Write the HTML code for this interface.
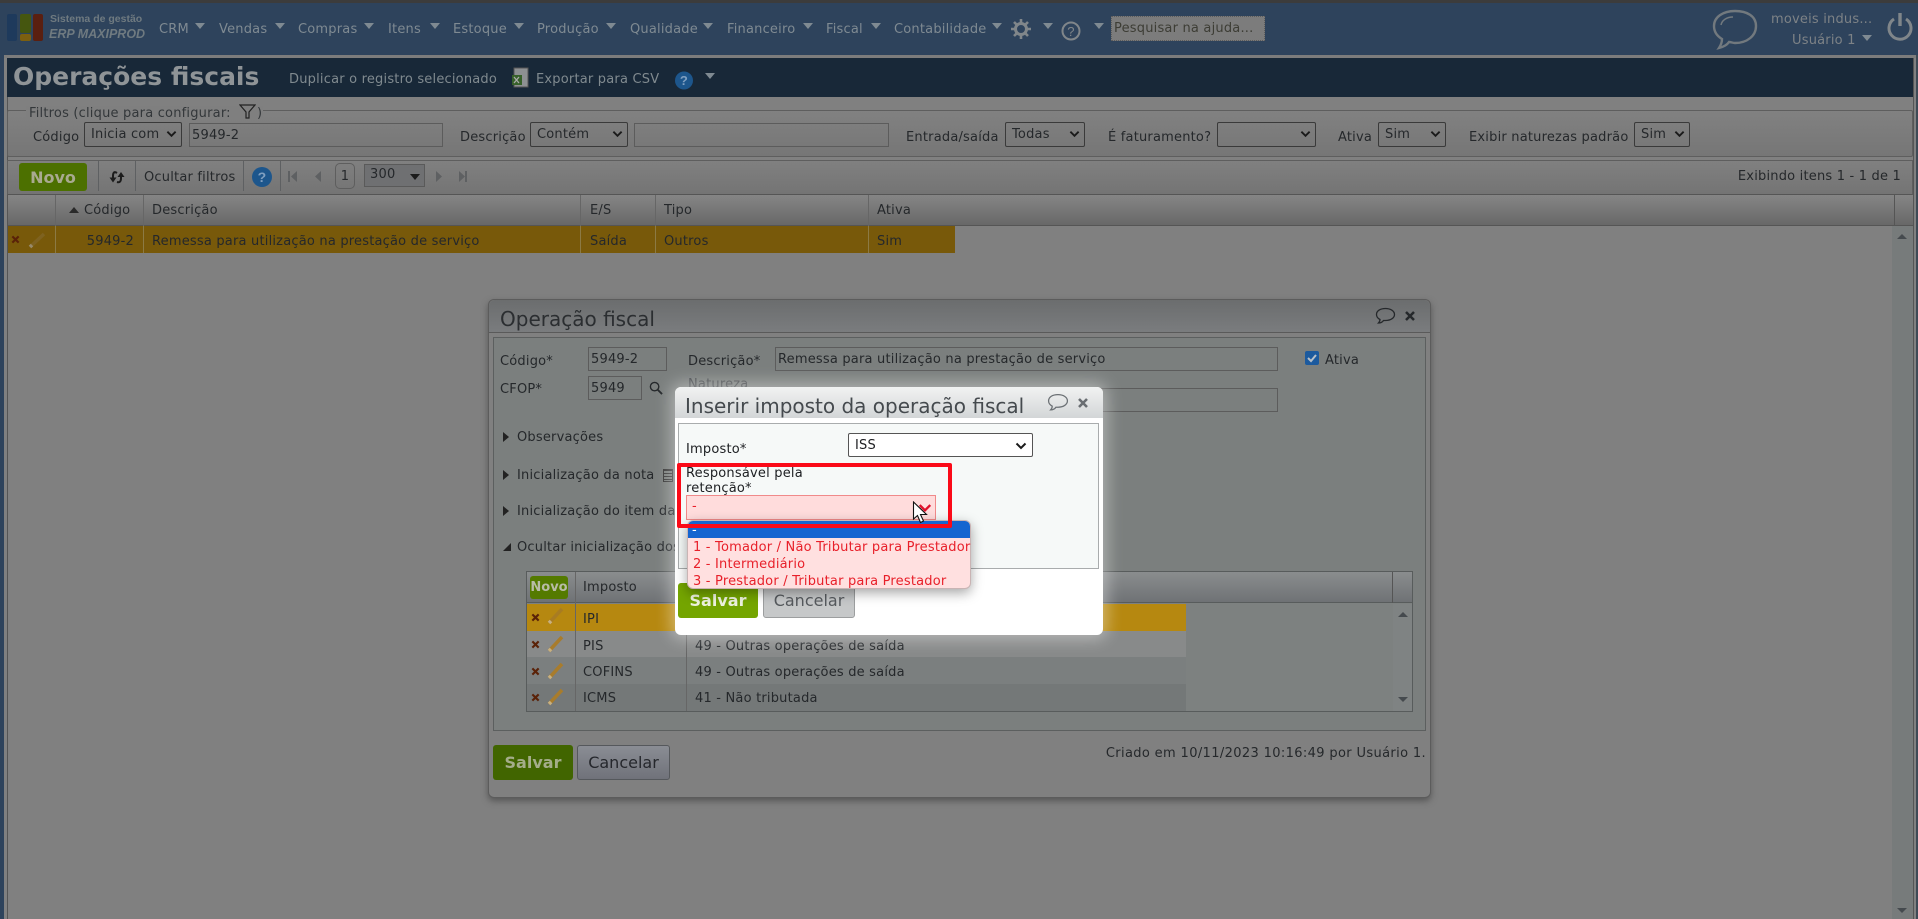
<!DOCTYPE html>
<html lang="pt-BR"><head><meta charset="utf-8"><title>Operações fiscais</title>
<style>
*{box-sizing:border-box}
html,body{margin:0;padding:0;width:1918px;height:919px;overflow:hidden;background:#808080}
body{position:relative;font-family:"DejaVu Sans","Liberation Sans",sans-serif;font-size:13px;letter-spacing:.2px;color:#25282b}
.a{position:absolute}
.t{position:absolute;white-space:nowrap;line-height:16px;height:16px;margin-top:1px}
.m{color:#7f8a92}
.tri{position:absolute;width:0;height:0;border-left:5px solid transparent;border-right:5px solid transparent;border-top:6px solid #7f8a92}
.sel{position:absolute;border:1px solid #3a3a3a;border-radius:2px;height:25px;line-height:24px;padding-left:6px;color:#25282b;white-space:nowrap}
.sel svg{position:absolute;right:4px;top:7px}
.inp{position:absolute;border:1px solid #5c5c5c;height:24px;line-height:24px;padding-left:2px;color:#25282b;white-space:nowrap}
.sep{position:absolute;width:1px;background:#5e6062}
.btn{position:absolute;border-radius:3px;text-align:center;font-weight:bold;letter-spacing:0}
</style></head><body>

<!-- top header -->
<div class="a" style="left:0;top:0;width:1918px;height:3px;background:#3c3c3c"></div>
<div class="a" style="left:0;top:3px;width:1918px;height:52px;background:#2e435c"></div>
<div class="a" style="left:0;top:55px;width:4px;height:864px;background:#2e435c"></div>
<div class="a" style="left:1916px;top:55px;width:2px;height:864px;background:#3e4a55"></div>
<div class="a" style="left:1913px;top:55px;width:1px;height:864px;background:#555"></div>
<div class="a" style="left:7px;top:57px;width:1px;height:862px;background:#555"></div>

<div class="a" style="left:7px;top:14px;width:10px;height:27px;background:#1e3a5c;border-radius:2px"></div>
<div class="a" style="left:20px;top:14px;width:11px;height:19px;background:#45560f;border-radius:2px"></div>
<div class="a" style="left:20px;top:34px;width:11px;height:7px;background:#7c5f10;border-radius:2px"></div>
<div class="a" style="left:33px;top:14px;width:10px;height:27px;background:#5a1f10;border-radius:2px"></div>
<div class="t" style="left:50px;top:10px;font-weight:bold;color:#6f7a80;font-family:'Liberation Sans',sans-serif;font-size:10.500px;letter-spacing:0">Sistema de gestão</div>
<div class="t" style="left:49px;top:25px;font-size:12.500px;letter-spacing:0;font-weight:bold;font-style:italic;color:#6f7a80;font-family:'Liberation Sans',sans-serif">ERP MAXIPROD</div>

<div class="t m" style="left:159px;top:21px">CRM</div><div class="tri" style="left:195px;top:23px"></div>
<div class="t m" style="left:219px;top:21px">Vendas</div><div class="tri" style="left:275px;top:23px"></div>
<div class="t m" style="left:298px;top:21px">Compras</div><div class="tri" style="left:364px;top:23px"></div>
<div class="t m" style="left:388px;top:21px">Itens</div><div class="tri" style="left:430px;top:23px"></div>
<div class="t m" style="left:453px;top:21px">Estoque</div><div class="tri" style="left:514px;top:23px"></div>
<div class="t m" style="left:537px;top:21px">Produção</div><div class="tri" style="left:606px;top:23px"></div>
<div class="t m" style="left:630px;top:21px">Qualidade</div><div class="tri" style="left:703px;top:23px"></div>
<div class="t m" style="left:727px;top:21px">Financeiro</div><div class="tri" style="left:803px;top:23px"></div>
<div class="t m" style="left:826px;top:21px">Fiscal</div><div class="tri" style="left:871px;top:23px"></div>
<div class="t m" style="left:894px;top:21px">Contabilidade</div><div class="tri" style="left:992px;top:23px"></div>

<svg class="a" style="left:1011px;top:19px" width="20" height="20" viewBox="0 0 20 20"><circle cx="10" cy="10" r="5.500" fill="none" stroke="#80868a" stroke-width="3"/><g stroke="#80868a" stroke-width="2.600"><path d="M10 0v3.500M10 16.500V20M0 10h3.500M16.500 10H20M3 3l2.500 2.500M14.500 14.500L17 17M17 3l-2.500 2.500M5.500 14.500L3 17"/></g></svg>
<div class="tri" style="left:1043px;top:23px"></div>
<svg class="a" style="left:1061px;top:21px" width="20" height="20" viewBox="0 0 20 20"><circle cx="10" cy="10" r="8.500" fill="none" stroke="#80868a" stroke-width="2"/><text x="10" y="15" text-anchor="middle" font-size="13" fill="#80868a" font-family="Liberation Sans,sans-serif">?</text></svg>
<div class="tri" style="left:1094px;top:23px"></div>
<div class="a" style="left:1111px;top:16px;width:154px;height:25px;background:#7c7c7c;border:1px dotted #5c5c5c;line-height:24px;padding-left:2px;color:#3d3d35;white-space:nowrap;overflow:hidden">Pesquisar na ajuda...</div>

<svg class="a" style="left:1711px;top:8px" width="48" height="44" viewBox="0 0 48 44"><path d="M24 3C12 3 3 9 3 18c0 6 3 10 8 13 0 3-1 6-3 9 4-1 8-3 10-6 2 0 4 1 6 1 12 0 21-7 21-17S36 3 24 3z" fill="none" stroke="#72797e" stroke-width="2.400"/><path d="M10 17c1-5 6-8 12-8" fill="none" stroke="#72797e" stroke-width="1.500"/></svg>
<div class="t" style="left:1771px;top:11px;color:#7d8286">moveis indus...</div>
<div class="t" style="left:1792px;top:32px;color:#7d8286">Usuário 1</div>
<div class="tri" style="left:1862px;top:35px"></div>
<svg class="a" style="left:1886px;top:12px" width="28" height="30" viewBox="0 0 28 30"><path d="M8 7a11 11 0 1 0 12 0" fill="none" stroke="#80868a" stroke-width="3"/><path d="M14 1v13" stroke="#80868a" stroke-width="3.400"/></svg>

<!-- title bar -->
<div class="a" style="left:4px;top:55px;width:1912px;height:3px;background:#7c7c7c"></div>
<div class="a" style="left:7px;top:58px;width:1906px;height:39px;background:#182838"></div>
<div class="t" style="left:13px;top:60px;margin-top:0;height:34px;line-height:34px;font-size:25px;letter-spacing:0;font-weight:bold;color:#8f9497">Operações fiscais</div>
<div class="t" style="left:289px;top:71px;color:#808a8f">Duplicar o registro selecionado</div>
<svg class="a" style="left:511px;top:67px" width="20" height="22" viewBox="0 0 20 22"><rect x="3" y="1" width="14" height="19" fill="#8d9092" stroke="#555"/><rect x="1" y="8" width="10" height="10" fill="#37602a"/><path d="M3 10l5 6M8 10l-5 6" stroke="#aaa" stroke-width="1.300"/></svg>
<div class="t" style="left:536px;top:71px;color:#808a8f">Exportar para CSV</div>
<svg class="a" style="left:675px;top:71px" width="18" height="19" viewBox="0 0 18 19"><circle cx="9" cy="9.500" r="9" fill="#1d568c"/><text x="9" y="14" text-anchor="middle" font-size="13" font-weight="bold" fill="#7f9fc0" font-family="Liberation Sans,sans-serif">?</text></svg>
<div class="tri" style="left:705px;top:73px"></div>

<!-- filters -->
<div class="a" style="left:7px;top:110px;width:1906px;height:47px;border:1px solid #5e5e5e;border-radius:2px;background:linear-gradient(#818181,#767676)"></div>
<div class="a" style="left:26px;top:106px;width:237px;height:12px;background:#7f7f7f"></div>
<div class="t" style="left:29px;top:105px;color:#33373a">Filtros (clique para configurar:</div>
<svg class="a" style="left:239px;top:104px" width="17" height="15" viewBox="0 0 17 15"><path d="M1 1h15l-6 7v6H7V8z" fill="none" stroke="#222" stroke-width="1.200"/></svg>
<div class="t" style="left:257px;top:105px;color:#33373a">)</div>

<svg width="0" height="0" style="position:absolute"><symbol id="c" viewBox="0 0 12 8"><path d="M1.500 1.500L6 6l4.500-4.500" fill="none" stroke="#1a1a1a" stroke-width="2"/></symbol></svg>

<div class="t" style="left:33px;top:129px">Código</div>
<div class="sel" style="left:84px;top:122px;width:98px">Inicia com<svg width="11" height="8"><use href="#c"/></svg></div>
<div class="inp" style="left:189px;top:123px;width:254px">5949-2</div>
<div class="t" style="left:460px;top:129px">Descrição</div>
<div class="sel" style="left:530px;top:122px;width:98px">Contém<svg width="11" height="8"><use href="#c"/></svg></div>
<div class="inp" style="left:634px;top:123px;width:255px"></div>
<div class="t" style="left:906px;top:129px">Entrada/saída</div>
<div class="sel" style="left:1005px;top:122px;width:80px">Todas<svg width="11" height="8"><use href="#c"/></svg></div>
<div class="t" style="left:1108px;top:129px">É faturamento?</div>
<div class="sel" style="left:1217px;top:122px;width:99px"><svg width="11" height="8"><use href="#c"/></svg></div>
<div class="t" style="left:1338px;top:129px">Ativa</div>
<div class="sel" style="left:1378px;top:122px;width:68px">Sim<svg width="11" height="8"><use href="#c"/></svg></div>
<div class="t" style="left:1469px;top:129px">Exibir naturezas padrão</div>
<div class="sel" style="left:1634px;top:122px;width:56px">Sim<svg width="11" height="8"><use href="#c"/></svg></div>

<!-- toolbar -->
<div class="a" style="left:7px;top:160px;width:1906px;height:35px;border:1px solid #5e5e5e;border-bottom:1px solid #555;background:linear-gradient(#808080,#747474)"></div>
<div class="btn" style="left:19px;top:163px;width:68px;height:28px;line-height:29px;background:#4c7000;color:#a9aa90;font-size:16px">Novo</div>
<div class="sep" style="left:98px;top:161px;height:30px"></div>
<svg class="a" style="left:108px;top:171px" width="18" height="13" viewBox="0 0 18 13"><path d="M9 2C6 0 5 2 5 5v3M9 11c3 1 4-1 4-4V4" fill="none" stroke="#1c1c1c" stroke-width="2"/><path d="M1.500 6.500h7L5 11.500zM9.500 6l3.500-5 3.500 5z" fill="#1c1c1c"/></svg>
<div class="sep" style="left:135px;top:161px;height:30px"></div>
<div class="t" style="left:144px;top:169px">Ocultar filtros</div>
<div class="sep" style="left:243px;top:161px;height:30px"></div>
<svg class="a" style="left:252px;top:167px" width="20" height="20" viewBox="0 0 20 20"><circle cx="10" cy="10" r="10" fill="#1d568c"/><text x="10" y="15" text-anchor="middle" font-size="14" font-weight="bold" fill="#7f9fc0" font-family="Liberation Sans,sans-serif">?</text></svg>
<div class="sep" style="left:280px;top:161px;height:30px"></div>
<svg class="a" style="left:287px;top:170px" width="180" height="14" viewBox="0 0 180 14" fill="#5e6062"><rect x="1" y="1" width="2" height="11"/><path d="M10 1v11L4 6.500zM34 1v11L28 6.500zM149 1v11l6-5.500zM172 1v11l6-5.500z"/><rect x="178" y="1" width="2" height="11"/></svg>
<div class="a" style="left:335px;top:163px;width:20px;height:26px;border:1px solid #5e5e5e;border-radius:5px;text-align:center;line-height:25px">1</div>
<div class="a" style="left:364px;top:164px;width:61px;height:23px;border:1px solid #5a5a5a;background:#6f7072;line-height:20px;padding-left:5px">300</div>
<div class="tri" style="left:410px;top:174px;border-top-color:#1c1c1c"></div>
<div class="t" style="right:17px;top:168px">Exibindo itens 1 - 1 de 1</div>

<!-- grid -->
<div class="a" style="left:8px;top:195px;width:1905px;height:31px;border-bottom:1px solid #555;background:linear-gradient(#858585,#686868)"></div>
<div class="sep" style="left:55px;top:195px;height:58px;background:#666"></div>
<div class="sep" style="left:143px;top:195px;height:58px;background:#666"></div>
<div class="sep" style="left:580px;top:195px;height:58px;background:#666"></div>
<div class="sep" style="left:655px;top:195px;height:58px;background:#666"></div>
<div class="sep" style="left:868px;top:195px;height:58px;background:#666"></div>
<div class="sep" style="left:1894px;top:195px;height:31px;background:#555"></div>
<div class="tri" style="left:69px;top:207px;border-top:0;border-bottom:6px solid #2a2a2a"></div>
<div class="t" style="left:84px;top:202px">Código</div>
<div class="t" style="left:152px;top:202px">Descrição</div>
<div class="t" style="left:590px;top:202px">E/S</div>
<div class="t" style="left:664px;top:202px">Tipo</div>
<div class="t" style="left:877px;top:202px">Ativa</div>

<div class="a" style="left:8px;top:226px;width:947px;height:27px;background:#78590a"></div>
<div class="sep" style="left:55px;top:226px;height:27px;background:#8c7a44"></div>
<div class="sep" style="left:143px;top:226px;height:27px;background:#8c7a44"></div>
<div class="sep" style="left:580px;top:226px;height:27px;background:#8c7a44"></div>
<div class="sep" style="left:655px;top:226px;height:27px;background:#8c7a44"></div>
<div class="sep" style="left:868px;top:226px;height:27px;background:#8c7a44"></div>
<svg class="a" style="left:11px;top:235px" width="9" height="9" viewBox="0 0 10 10"><path d="M1.500 1.500l7 7M8.500 1.500l-7 7" stroke="#5a2208" stroke-width="2.400"/></svg>
<svg class="a" style="left:27px;top:230px" width="20" height="20" viewBox="0 0 20 20"><path d="M3 17L17 4" stroke="#7e6220" stroke-width="3.500"/><path d="M3 17l2-2" stroke="#97896a" stroke-width="3.500"/></svg>
<div class="t" style="left:84px;top:233px;width:50px;text-align:right">5949-2</div>
<div class="t" style="left:152px;top:233px">Remessa para utilização na prestação de serviço</div>
<div class="t" style="left:590px;top:233px">Saída</div>
<div class="t" style="left:664px;top:233px">Outros</div>
<div class="t" style="left:877px;top:233px">Sim</div>
<div class="a" style="left:1892px;top:226px;width:21px;height:693px;background:#777b7b"></div>
<div class="tri" style="left:1897px;top:234px;border-top:0;border-bottom:5px solid #454a4e"></div>
<div class="tri" style="left:1897px;top:908px;border-top:5px solid #454a4e"></div>

<!-- outer dialog -->
<div class="a" style="left:488px;top:299px;width:943px;height:499px;background:#808080;border:1px solid #5c5c5c;border-radius:6px;box-shadow:0 3px 7px #555"></div>
<div class="a" style="left:489px;top:300px;width:941px;height:33px;background:linear-gradient(#6b6d6e,#7a7c7e);border-bottom:1px solid #5a5a5a;border-radius:6px 6px 0 0"></div>
<div class="t" style="left:500px;top:305px;margin-top:0;height:28px;line-height:28px;font-size:20px;letter-spacing:0;color:#2b2e31">Operação fiscal</div>
<svg class="a" style="left:1375px;top:307px" width="21" height="18" viewBox="0 0 21 18"><path d="M10.500 1.500C5 1.500 1.500 4 1.500 7.500c0 2.500 1.500 4 3.500 5 0 1.500-.5 2.500-1.500 3.500 2 0 4-1 5-2.500h2c5 0 9-2.500 9-6s-4-6-9-6z" fill="none" stroke="#25282b" stroke-width="1.300"/></svg>
<svg class="a" style="left:1404px;top:310px" width="12" height="12" viewBox="0 0 12 12"><path d="M2 2l8 8M10 2l-8 8" stroke="#25282b" stroke-width="2.500"/></svg>
<div class="a" style="left:493px;top:337px;width:933px;height:394px;border:1px solid #5c5f5f;background:#7b7f7e"></div>

<div class="t" style="left:500px;top:353px">Código*</div>
<div class="inp" style="left:588px;top:347px;width:79px">5949-2</div>
<div class="t" style="left:688px;top:353px">Descrição*</div>
<div class="inp" style="left:775px;top:347px;width:503px">Remessa para utilização na prestação de serviço</div>
<div class="a" style="left:1305px;top:351px;width:14px;height:14px;border-radius:2px;background:#1c5a9e"></div>
<svg class="a" style="left:1305px;top:351px" width="14" height="14" viewBox="0 0 14 14"><path d="M3 7l3 3 5-6" fill="none" stroke="#b8c0c8" stroke-width="2"/></svg>
<div class="t" style="left:1325px;top:352px">Ativa</div>
<div class="t" style="left:500px;top:381px">CFOP*</div>
<div class="inp" style="left:588px;top:376px;width:54px">5949</div>
<svg class="a" style="left:649px;top:381px" width="14" height="14" viewBox="0 0 15 15"><circle cx="6" cy="6" r="4.500" fill="none" stroke="#25282b" stroke-width="1.500"/><path d="M9.500 9.500L14 14" stroke="#25282b" stroke-width="2"/></svg>
<div class="t" style="left:688px;top:376px;color:#4a4d50">Natureza</div>
<div class="inp" style="left:775px;top:388px;width:503px"></div>

<div class="tri" style="left:503px;top:432px;border:0;border-left:6px solid #222;border-top:5px solid transparent;border-bottom:5px solid transparent"></div>
<div class="t" style="left:517px;top:429px">Observações</div>
<div class="tri" style="left:503px;top:470px;border:0;border-left:6px solid #222;border-top:5px solid transparent;border-bottom:5px solid transparent"></div>
<div class="t" style="left:517px;top:467px">Inicialização da nota</div>
<div class="a" style="left:663px;top:469px;width:10px;height:13px;border:1px solid #3a3a3a;background:repeating-linear-gradient(#3a3a3a 0 1px,transparent 1px 3px)"></div>
<div class="tri" style="left:503px;top:506px;border:0;border-left:6px solid #222;border-top:5px solid transparent;border-bottom:5px solid transparent"></div>
<div class="t" style="left:517px;top:503px">Inicialização do item da nota</div>
<div class="a" style="left:503px;top:543px;width:0;height:0;border-right:8px solid #222;border-top:8px solid transparent"></div>
<div class="t" style="left:517px;top:539px">Ocultar inicialização dos impostos</div>

<!-- inner grid -->
<div class="a" style="left:526px;top:571px;width:887px;height:141px;border:1px solid #585c5c;background:#7d8180"></div>
<div class="a" style="left:527px;top:572px;width:885px;height:31px;border-bottom:1px solid #585c5c;background:linear-gradient(#8a8d8e,#6f7275)"></div>
<div class="btn" style="left:530px;top:576px;width:38px;height:23px;line-height:24px;font-size:13px;background:#547a00;color:#b9bca6">Novo</div>
<div class="t" style="left:583px;top:579px">Imposto</div>
<div class="a" style="left:527px;top:604px;width:659px;height:27px;background:#b68810"></div>
<div class="a" style="left:527px;top:631px;width:659px;height:26px;background:#888a8a"></div>
<div class="a" style="left:527px;top:657px;width:659px;height:27px;background:#7b7f7f"></div>
<div class="a" style="left:527px;top:684px;width:659px;height:27px;background:#747878"></div>
<div class="sep" style="left:575px;top:572px;height:139px;background:#666"></div>
<div class="sep" style="left:686px;top:572px;height:139px;background:#666"></div>
<div class="a" style="left:1393px;top:604px;width:19px;height:107px;background:#7f8383"></div>
<div class="sep" style="left:1392px;top:572px;height:31px;background:#555"></div>
<div class="tri" style="left:1398px;top:612px;border-top:0;border-bottom:5px solid #454a4e"></div>
<div class="tri" style="left:1398px;top:697px;border-top:5px solid #454a4e"></div>

<svg class="a" style="left:531px;top:613px" width="9" height="9" viewBox="0 0 10 10"><path d="M1.500 1.500l7 7M8.500 1.500l-7 7" stroke="#5a2208" stroke-width="2.400"/></svg>
<svg class="a" style="left:547px;top:606px" width="18" height="20" viewBox="0 0 18 20"><path d="M2 17L15 3" stroke="#a87c22" stroke-width="3.500"/><path d="M2 17l2-2" stroke="#c8b080" stroke-width="3.500"/></svg>
<svg class="a" style="left:531px;top:640px" width="9" height="9" viewBox="0 0 10 10"><path d="M1.500 1.500l7 7M8.500 1.500l-7 7" stroke="#5a2208" stroke-width="2.400"/></svg>
<svg class="a" style="left:547px;top:634px" width="18" height="20" viewBox="0 0 18 20"><path d="M2 17L15 3" stroke="#a87c2c" stroke-width="3.500"/><path d="M2 17l2-2" stroke="#c8b080" stroke-width="3.500"/></svg>
<svg class="a" style="left:531px;top:667px" width="9" height="9" viewBox="0 0 10 10"><path d="M1.500 1.500l7 7M8.500 1.500l-7 7" stroke="#5a2208" stroke-width="2.400"/></svg>
<svg class="a" style="left:547px;top:661px" width="18" height="20" viewBox="0 0 18 20"><path d="M2 17L15 3" stroke="#a87c2c" stroke-width="3.500"/><path d="M2 17l2-2" stroke="#c8b080" stroke-width="3.500"/></svg>
<svg class="a" style="left:531px;top:693px" width="9" height="9" viewBox="0 0 10 10"><path d="M1.500 1.500l7 7M8.500 1.500l-7 7" stroke="#5a2208" stroke-width="2.400"/></svg>
<svg class="a" style="left:547px;top:687px" width="18" height="20" viewBox="0 0 18 20"><path d="M2 17L15 3" stroke="#a87c2c" stroke-width="3.500"/><path d="M2 17l2-2" stroke="#c8b080" stroke-width="3.500"/></svg>

<div class="t" style="left:583px;top:611px">IPI</div>
<div class="t" style="left:583px;top:638px">PIS</div>
<div class="t" style="left:695px;top:638px">49 - Outras operações de saída</div>
<div class="t" style="left:583px;top:664px">COFINS</div>
<div class="t" style="left:695px;top:664px">49 - Outras operações de saída</div>
<div class="t" style="left:583px;top:690px">ICMS</div>
<div class="t" style="left:695px;top:690px">41 - Não tributada</div>

<div class="btn" style="left:493px;top:745px;width:80px;height:35px;line-height:35px;background:#416500;color:#a4ad8a;font-size:16px">Salvar</div>
<div class="btn" style="left:577px;top:745px;width:93px;height:35px;line-height:33px;background:linear-gradient(#8a8d94,#70727a);border:1px solid #55585c;color:#25272c;font-size:16px;font-weight:normal">Cancelar</div>
<div class="t" style="right:492px;top:745px;letter-spacing:.36px">Criado em 10/11/2023 10:16:49 por Usuário 1.</div>

<!-- inner dialog -->
<div class="a" style="left:675px;top:387px;width:428px;height:248px;background:#fff;border-radius:6px;box-shadow:0 0 16px 4px rgba(255,255,255,.4)"></div>
<div class="a" style="left:675px;top:387px;width:428px;height:31px;background:linear-gradient(#f1f2f2,#d3d6d7);border-radius:6px 6px 0 0"></div>
<div class="t" style="left:685px;top:392px;margin-top:0;height:28px;line-height:28px;font-size:20px;letter-spacing:0;color:#454a4e">Inserir imposto da operação fiscal</div>
<svg class="a" style="left:1047px;top:393px" width="22" height="19" viewBox="0 0 21 18"><path d="M10.500 1.500C5 1.500 1.500 4 1.500 7.500c0 2.500 1.500 4 3.500 5 0 1.500-.5 2.500-1.500 3.500 2 0 4-1 5-2.500h2c5 0 9-2.500 9-6s-4-6-9-6z" fill="none" stroke="#6b7074" stroke-width="1.200"/></svg>
<svg class="a" style="left:1077px;top:397px" width="12" height="12" viewBox="0 0 12 12"><path d="M2 2l8 8M10 2l-8 8" stroke="#6a6e72" stroke-width="2.600"/></svg>
<div class="a" style="left:678px;top:423px;width:421px;height:146px;border:1px solid #a9acad;background:#f6f9f8"></div>
<div class="t" style="left:686px;top:441px;color:#1d1f22">Imposto*</div>
<div class="a" style="left:848px;top:433px;width:185px;height:24px;background:#fff;border:1px solid #555;border-radius:2px;line-height:23px;padding-left:6px;color:#1d1f22">ISS<svg style="position:absolute;right:5px;top:8px" width="12" height="8"><use href="#c"/></svg></div>
<div class="t" style="left:686px;top:465px;color:#1d1f22">Responsável pela</div>
<div class="t" style="left:686px;top:480px;color:#1d1f22">retenção*</div>
<div class="a" style="left:686px;top:495px;width:250px;height:25px;background:#ffdcdc;border:1px solid #f08a8a;line-height:22px;padding-left:5px;color:#e8202a">-</div>
<svg class="a" style="left:918px;top:503px" width="14" height="10" viewBox="0 0 12 8"><path d="M1.500 1.500L6 6l4.500-4.500" fill="none" stroke="#e0102a" stroke-width="2"/></svg>
<div class="btn" style="left:678px;top:583px;width:80px;height:35px;line-height:35px;background:#74a500;color:#eef3df;font-size:16px">Salvar</div>
<div class="btn" style="left:763px;top:583px;width:92px;height:35px;line-height:33px;background:#c6c8c9;border:1px solid #9c9e9f;color:#565a5e;font-size:16px;font-weight:normal">Cancelar</div>
<div class="a" style="left:687px;top:520px;width:284px;height:69px;background:#ffe0e0;border-radius:6px;border:1px solid #c9b4b4;box-shadow:0 4px 12px rgba(0,0,0,.35);overflow:hidden">
 <div style="height:17px;background:#1565d0;color:#fff;line-height:20px;padding-left:4px">-</div>
</div>
<div class="t" style="left:693px;top:539px;color:#e8202a">1 - Tomador / Não Tributar para Prestador</div>
<div class="t" style="left:693px;top:556px;color:#e8202a">2 - Intermediário</div>
<div class="t" style="left:693px;top:573px;color:#e8202a">3 - Prestador / Tributar para Prestador</div>

<!-- highlight -->
<div class="a" style="left:677px;top:463px;width:275px;height:65px;border:4px solid #fb0a18;border-radius:2px"></div>

<!-- cursor -->
<svg class="a" style="left:912px;top:501px" width="18" height="24" viewBox="0 0 18 24"><path d="M1.500 1v17l4-3.500 3 7 3-1.500-3-6.500h6z" fill="#fff" stroke="#111" stroke-width="1.100"/></svg>

</body></html>
